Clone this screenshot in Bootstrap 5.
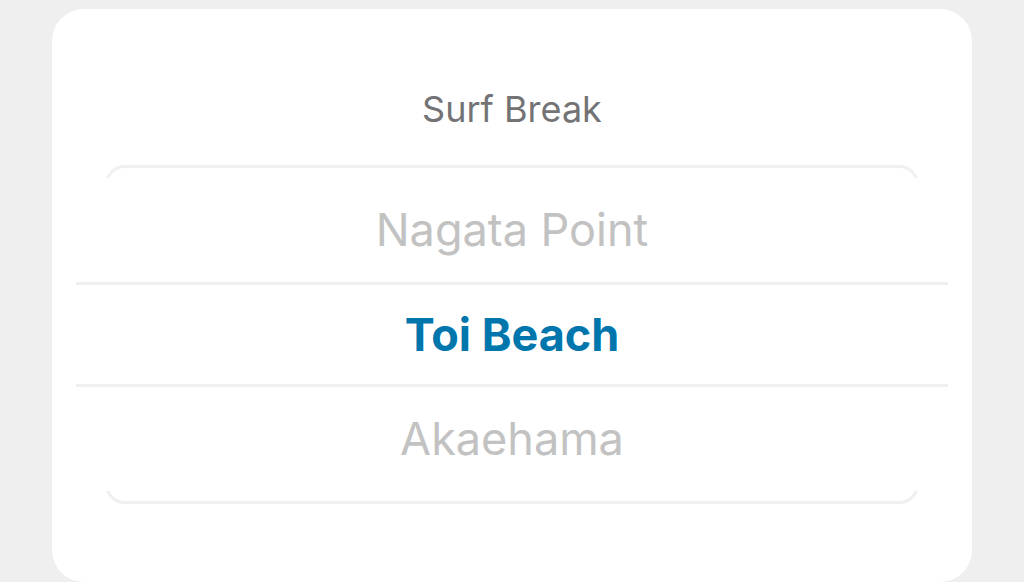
<!DOCTYPE html>
<html lang="en">
<head>
<meta charset="utf-8">
<meta name="viewport" content="width=device-width, initial-scale=1">
<title>Surf Break</title>
<link href="https://cdn.jsdelivr.net/npm/bootstrap@5.3.0/dist/css/bootstrap.min.css" rel="stylesheet">
<style>
body{background:#efefef;font-family:Inter,"Liberation Sans",sans-serif}
.panel{margin:9px 52px 0;padding:76px 24px 78px;border-radius:32px}
.panel-title{font-size:36px;line-height:48px;color:#737375;margin-bottom:32px}
/* Visible ends of the rounded frame behind the wheel */
.cap{height:13px;margin:0 29px;overflow:hidden}
.cap::before{content:"";display:block;height:60px;border:3px solid #f0f0f0;border-radius:20px}
.cap-end{display:flex;align-items:flex-end}
.cap-end::before{flex:1 0 0}
.choice{border:0;background:none;height:104px;padding:0;font-size:45px;line-height:52px;color:#c2c2c2}
.choice.active{height:105px;color:#0076ac;font-weight:700;border-top:3px solid #f0f0f0;border-bottom:3px solid #f0f0f0}
</style>
</head>
<body>
<main class="panel bg-white text-center">
<h1 class="panel-title fw-normal" id="wheel-title">Surf Break</h1>
<div class="cap"></div>
<div class="d-flex flex-column" role="listbox" aria-labelledby="wheel-title">
<button type="button" class="choice" role="option" aria-selected="false">Nagata Point</button>
<button type="button" class="choice active" role="option" aria-selected="true">Toi Beach</button>
<button type="button" class="choice" role="option" aria-selected="false">Akaehama</button>
</div>
<div class="cap cap-end"></div>
</main>
<script src="https://cdn.jsdelivr.net/npm/bootstrap@5.3.0/dist/js/bootstrap.bundle.min.js"></script>
</body>
</html>
